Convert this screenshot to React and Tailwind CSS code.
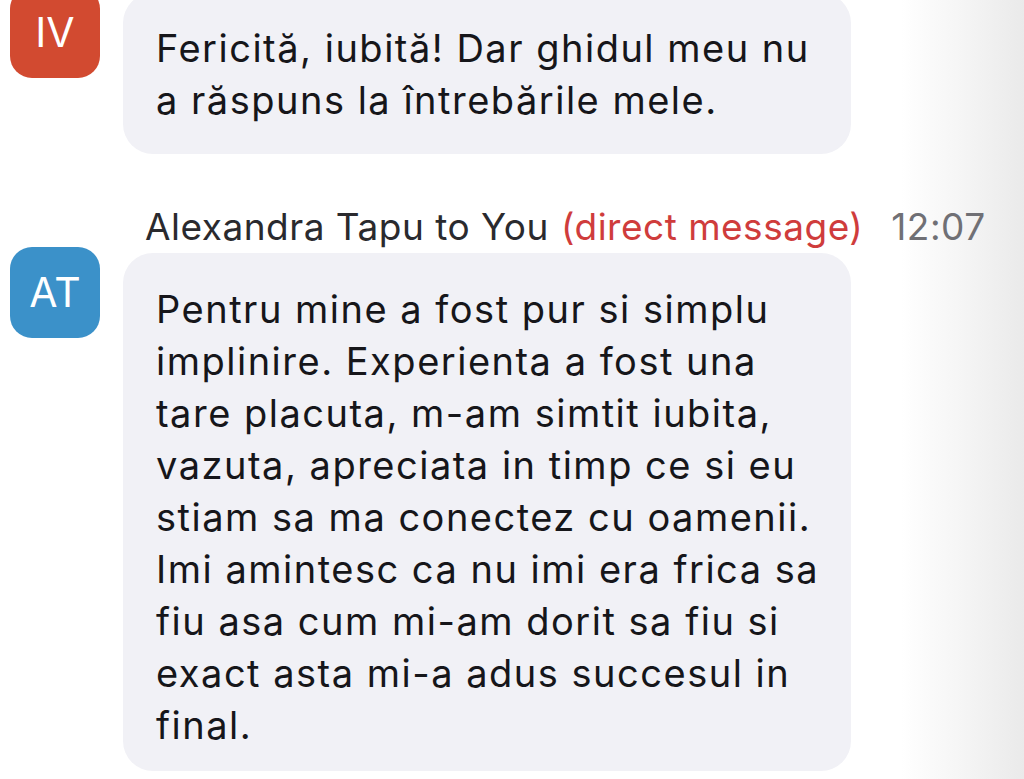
const firstLines = [
  "Fericită, iubită! Dar ghidul meu nu",
  "a răspuns la întrebările mele.",
];

const secondLines = [
  "Pentru mine a fost pur si simplu",
  "implinire. Experienta a fost una",
  "tare placuta, m-am simtit iubita,",
  "vazuta, apreciata in timp ce si eu",
  "stiam sa ma conectez cu oamenii.",
  "Imi amintesc ca nu imi era frica sa",
  "fiu asa cum mi-am dorit sa fiu si",
  "exact asta mi-a adus succesul in",
  "final.",
];

function Avatar({ initials, color }) {
  return (
    <div
      className={`w-[90px] h-[91px] shrink-0 rounded-[22px] ${color} flex items-center justify-center text-white text-[41px] leading-none`}
    >
      {initials}
    </div>
  );
}

function Bubble({ lines, className = "" }) {
  return (
    <div
      className={`w-[728px] rounded-[30px] bg-[#f1f1f6] pl-[33px] pr-6 text-[38px] tracking-[1.5px] leading-[52px] text-[#16161a] ${className}`}
    >
      {lines.map((line) => (
        <div key={line} className="whitespace-nowrap">
          {line}
        </div>
      ))}
    </div>
  );
}

export default function App() {
  return (
    <div
      className="w-full h-[779px] overflow-hidden bg-[linear-gradient(to_right,#ffffff_0%,#ffffff_88%,#f5f5f5_94%,#eaeaea_100%)]"
      style={{ fontFamily: "Inter, 'Noto Sans', sans-serif" }}
    >
      {/* incoming message, cut off at top */}
      <div className="flex gap-[23px] pl-[10px] -mt-[13px]">
        <div className="flex flex-col justify-start">
          <Avatar initials="IV" color="bg-[#d24a30]" />
        </div>
        <Bubble lines={firstLines} className="mt-[6px] pt-[29px] pb-[28px]" />
      </div>

      {/* direct message header */}
      <div className="mt-[47px] pl-[145px] flex items-baseline text-[37px] tracking-[0.5px] leading-[52px] whitespace-nowrap">
        <span className="text-[#2a2a2e]">Alexandra Tapu to You</span>
        <span className="ml-[12px] text-[#cf3c3c]">(direct message)</span>
        <span className="ml-[28px] text-[#707075]">12:07</span>
      </div>

      {/* direct message */}
      <div className="flex gap-[23px] pl-[10px] -mt-[6px]">
        <div className="flex flex-col justify-start">
          <Avatar initials="AT" color="bg-[#3b91c9]" />
        </div>
        <Bubble lines={secondLines} className="mt-[6px] pt-[30px] pb-[20px]" />
      </div>
    </div>
  );
}
